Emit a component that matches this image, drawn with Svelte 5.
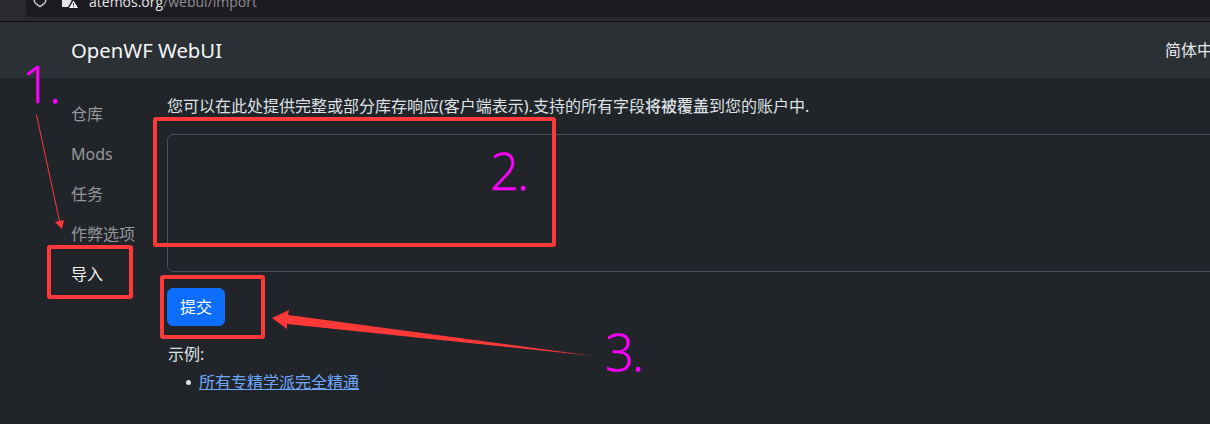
<script>
  const navItems = [
    { label: '仓库' },
    { label: 'Mods' },
    { label: '任务' },
    { label: '作弊选项' },
    { label: '导入', active: true }
  ];
  const boxes = [
    { cls: 'box-nav' },
    { cls: 'box-area' },
    { cls: 'box-btn' }
  ];
</script>

<div class="page">
  <div class="chrome">
    <div class="urlbar">
      <svg class="shield" width="14" height="18" viewBox="0 0 14 18"><path d="M1 1v6c0 4 3 6 6 7.500c3-1.500 6-3.500 6-7.500V1" fill="none" stroke="#cfcfd3" stroke-width="1.400"/></svg>
      <svg class="lock" width="16" height="10" viewBox="0 0 16 10"><path d="M0 0h9.500v3L6 9H0z" fill="#e4e4e6"/><path d="M11.500 2.500L16 10H7z" fill="#f2f2f4"/><path d="M11.500 5v2.500M11.500 8.300v.9" stroke="#1c1b20" stroke-width="1"/></svg>
      <span class="url">atemos.org<span class="path">/webui/import</span></span>
    </div>
  </div>
  <header class="navbar">
    <span class="brand">OpenWF WebUI</span>
    <span class="lang">简体中文</span>
  </header>
  <div class="content">
    <nav class="side">
      {#each navItems as item}
        <a class="side-link" class:active={item.active} href="#top">{item.label}</a>
      {/each}
    </nav>
    <main class="main">
      <p class="lead">您可以在此处提供完整或部分库存响应(客户端表示).支持的所有字段<b>将被覆盖</b>到您的账户中.</p>
      <textarea class="field"></textarea>
      <button class="submit">提交</button>
      <p class="examples">示例:</p>
      <ul class="list">
        <li><a href="#top">所有专精学派完全精通</a></li>
      </ul>
    </main>
  </div>

  {#each boxes as b}
    <div class="mark {b.cls}"></div>
  {/each}
  <span class="num n1">1.</span>
  <span class="num n2">2.</span>
  <span class="num n3">3.</span>
  <svg class="arrows" width="1210" height="424" viewBox="0 0 1210 424">
    <path d="M36 115L59 221L55 222L62 229L64 220L60 221L37 115Z" fill="#ff3838"/>
    <path d="M272 318L289 310L288 315L594 356L287 324L287 329Z" fill="#ff3838"/>
  </svg>
</div>

<style>
  :global(body) { margin: 0; background: #212529; }
  .page {
    position: relative;
    width: 1210px;
    height: 424px;
    overflow: hidden;
    background: #212529;
    color: #dee2e6;
    font-family: "Noto Sans", "Noto Sans CJK SC", sans-serif;
    font-size: 16px;
  }
  .chrome {
    height: 21px;
    background: #2a2930;
    border-bottom: 1px solid #0c0c0e;
    display: flex;
    justify-content: flex-end;
  }
  .urlbar {
    width: 1184px;
    height: 17px;
    background: #1c1b20;
    border-bottom-left-radius: 5px;
    display: flex;
    align-items: flex-end;
    overflow: hidden;
    color: #e4e4e6;
    font-family: "Open Sans", sans-serif;
    font-size: 14px;
    line-height: 17px;
  }
  .shield { margin: 0 0 7px 7px; flex: none; }
  .lock { margin: 0 0 9px 15px; flex: none; }
  .url { margin: 0 0 7px 11px; white-space: nowrap; flex: none; }
  .path { color: #8d8d92; }
  .navbar {
    height: 56px;
    background: #2b3035;
    display: flex;
    align-items: center;
    justify-content: space-between;
    padding-left: 71px;
  }
  .brand {
    font-size: 20.300px;
    color: #f5f6f7;
    line-height: 30px;
    margin-top: -1px;
  }
  .lang {
    width: 45px;
    white-space: nowrap;
    color: #e6e9ec;
    margin-top: -2px;
  }
  .content { display: flex; }
  .side {
    width: 96px;
    flex: none;
    padding: 16px 0 0 71px;
    display: flex;
    flex-direction: column;
    align-items: flex-start;
  }
  .side-link {
    height: 40px;
    line-height: 40px;
    white-space: nowrap;
    text-decoration: none;
    color: #96989b;
  }
  .side-link.active { color: #f1f2f3; }
  .main {
    flex: 1;
    min-width: 0;
    padding-top: 16px;
  }
  .lead {
    margin: 0 0 16px;
    height: 24px;
    line-height: 24px;
    white-space: nowrap;
  }
  .lead b { font-weight: 500; }
  .field {
    display: block;
    box-sizing: border-box;
    width: 1100px;
    height: 138px;
    background: #212529;
    border: 1px solid #495057;
    border-radius: 6px;
    resize: none;
    outline: none;
    margin: 0;
    padding: 0;
  }
  .submit {
    display: block;
    margin-top: 16px;
    width: 58px;
    height: 38px;
    padding: 0 0 2px;
    border: 1px solid #0d6efd;
    border-radius: 6px;
    background: #0d6efd;
    color: #fff;
    font-family: inherit;
    font-size: 16px;
  }
  .examples {
    margin: 16px 0 0 1px;
    height: 24px;
    line-height: 24px;
  }
  .list {
    margin: 4px 0 0;
    padding: 0 0 0 19px;
    list-style: none;
    line-height: 24px;
  }
  .list li {
    display: flex;
    align-items: center;
    gap: 8px;
  }
  .list li::before {
    content: "";
    width: 5px;
    height: 5px;
    border-radius: 50%;
    background: #dee2e6;
  }
  .list a { color: #6ea8fe; }
  .mark {
    position: absolute;
    box-sizing: border-box;
    border: 4px solid #ff3838;
    border-radius: 3px;
  }
  .box-nav { left: 47px; top: 245px; width: 86px; height: 54px; }
  .box-area { left: 153px; top: 117px; width: 403px; height: 130px; }
  .box-btn { left: 160px; top: 275px; width: 105px; height: 64px; }
  .num {
    position: absolute;
    color: #ff00ff;
    font-family: "Open Sans", sans-serif;
    font-weight: 350;
    font-size: 51px;
    letter-spacing: -2px;
    line-height: 60px;
    -webkit-text-stroke: 0.5px #ff00ff;
  }
  .n1 { left: 22px; top: 53px; }
  .n2 { left: 490px; top: 140px; }
  .n3 { left: 605px; top: 321px; }
  .arrows { position: absolute; left: 0; top: 0; pointer-events: none; }
</style>
